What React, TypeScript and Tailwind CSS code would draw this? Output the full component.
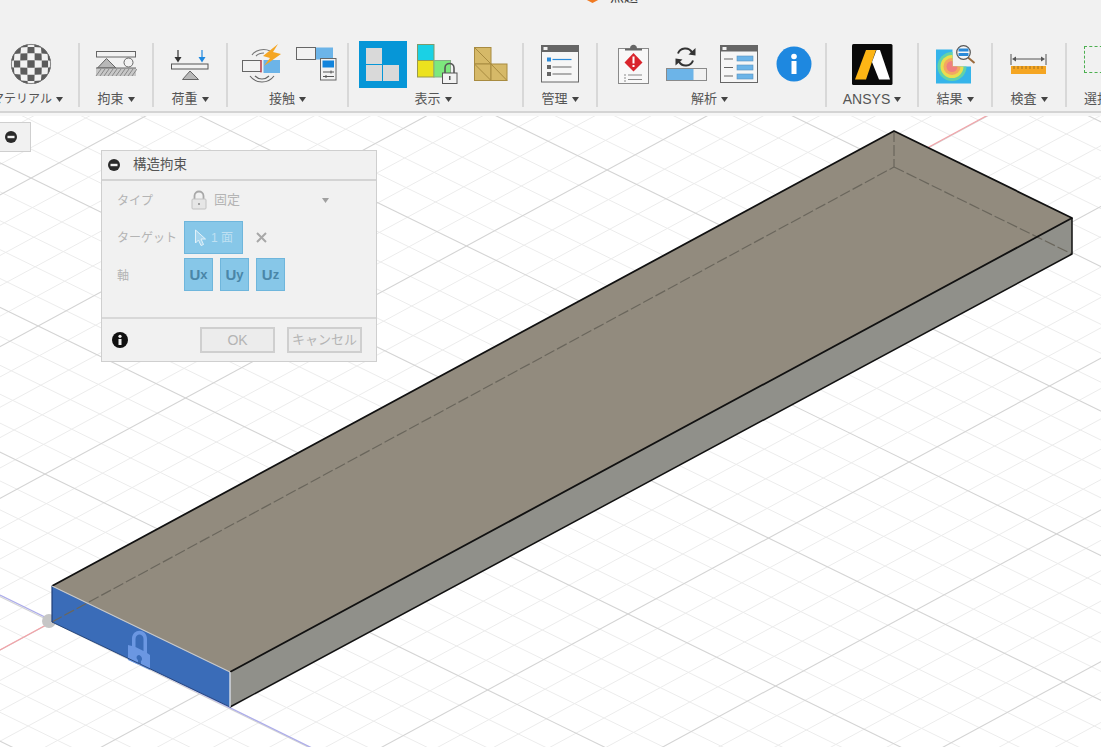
import type { ReactNode } from "react";

const jp = "font-['Liberation_Sans','Noto_Sans_CJK_JP',sans-serif]";

// grid: origin sits on the block corner, u runs along the red axis, v along the blue one
const O = { x: 52, y: 622 };
const U = { x: 140.5, y: -76 };
const V = { x: 147.5, y: 72 };

function gridLines() {
  const lines: { k: string; x1: number; y1: number; x2: number; y2: number; major: boolean }[] = [];
  for (let n = -60; n <= 60; n++) {
    const t = n / 5;
    const major = n % 5 === 0;
    const a = { x: O.x + U.x * t, y: O.y + U.y * t };
    lines.push({ k: `u${n}`, x1: a.x - V.x * 12, y1: a.y - V.y * 12, x2: a.x + V.x * 12, y2: a.y + V.y * 12, major });
    const b = { x: O.x + V.x * t, y: O.y + V.y * t };
    lines.push({ k: `v${n}`, x1: b.x - U.x * 12, y1: b.y - U.y * 12, x2: b.x + U.x * 12, y2: b.y + U.y * 12, major });
  }
  return lines;
}

function Scene() {
  const lines = gridLines();
  return (
    <svg className="absolute inset-0 h-full w-full" viewBox="0 113 1101 634">
      {lines.filter((l) => !l.major).map((l) => (
        <line key={l.k} x1={l.x1} y1={l.y1} x2={l.x2} y2={l.y2} stroke="#ececec" strokeWidth="1" />
      ))}
      {lines.filter((l) => l.major).map((l) => (
        <line key={l.k} x1={l.x1} y1={l.y1} x2={l.x2} y2={l.y2} stroke="#d4d4d4" strokeWidth="1.1" />
      ))}
      <line x1="0" y1="650" x2="988" y2="115" stroke="#f2a3a8" strokeWidth="1.3" />
      <line x1="0" y1="595" x2="312" y2="748" stroke="#adadea" strokeWidth="1.3" />
      <circle cx="49" cy="621" r="7" fill="#c6c6c6" />
      <polygon points="52,586 894,131 1072,218 230,672" fill="#928b7e" />
      <polygon points="230,672 1072,218 1072,254 230,707" fill="#90908a" />
      <polygon points="52,586 230,672 230,707 52,622" fill="#3a6cb8" />
      <g stroke="#6a665c" strokeWidth="1.2" strokeDasharray="11 3" fill="none">
        <line x1="52" y1="622" x2="894" y2="167" />
        <line x1="894" y1="167" x2="1072" y2="254" />
        <line x1="894" y1="131" x2="894" y2="167" />
      </g>
      <path fillRule="evenodd" fill="#6b97e2" d="M132 646v-7c0-11 15-11 15 0v14l3 2v15l-22-10v-15zM135.500 647l8 4v-12c0-6-8-6-8 0zM139 655c-3 0-3 4-1 5v4l3 1v-4c2-1 1-5-2-6z" />
      <g stroke="#111" strokeWidth="1.800" fill="none" strokeLinejoin="round">
        <polyline points="52,586 894,131 1072,218 230,672" />
        <polyline points="230,707 1072,254 1072,218" strokeWidth="1.500" />
      </g>
      <line x1="52" y1="622" x2="230" y2="707" stroke="#25467c" strokeWidth="1" />
      <line x1="52" y1="586" x2="52" y2="622" stroke="#1f3f78" strokeWidth="1.2" />
      <line x1="52" y1="586" x2="230" y2="672" stroke="#c8c8c8" strokeWidth="1.2" />
      <line x1="230" y1="672" x2="230" y2="707" stroke="#d8dde6" strokeWidth="1.4" />
    </svg>
  );
}

function MinusDot({ className }: { className: string }) {
  return (
    <svg className={className} viewBox="0 0 12 12">
      <circle cx="6" cy="6" r="6" fill="#2a2a2a" />
      <rect x="2.500" y="4.800" width="7" height="2.400" fill="#f1f1f1" />
    </svg>
  );
}

function CheckerBall() {
  const cells: string[] = [];
  // squares shrink a little towards the rim so it reads as a sphere
  const map = (i: number, j: number) => {
    const k = 7.4 * (1 - 0.012 * (i * i + j * j));
    return `${31 + i * k},${64 + j * k}`;
  };
  for (let i = -4; i < 4; i++) {
    for (let j = -4; j < 4; j++) {
      if ((i + j + 8) % 2 === 0) {
        cells.push([map(i + 0.5, j + 0.5), map(i + 1.5, j + 0.5), map(i + 1.5, j + 1.5), map(i + 0.5, j + 1.5)].join(" "));
      }
    }
  }
  return (
    <svg width="42" height="42" viewBox="10 43 42 42">
      <defs>
        <clipPath id="ball">
          <circle cx="31" cy="64" r="20" />
        </clipPath>
      </defs>
      <circle cx="31" cy="64" r="20" fill="#f2f2f2" />
      <g clipPath="url(#ball)">
        {cells.map((p) => (
          <polygon key={p} points={p} fill="#5c5c5c" />
        ))}
      </g>
      <circle cx="31" cy="64" r="19.600" fill="none" stroke="#666" strokeWidth="0.8" />
    </svg>
  );
}

function RestraintIcon() {
  return (
    <svg width="42" height="28" viewBox="96 50 42 28">
      <rect x="97.500" y="51.500" width="39" height="5.500" fill="#f2f2f2" stroke="#666" />
      <polygon points="107.500,58.500 98.500,68 117,68" fill="#b8b8b8" stroke="#666" />
      <circle cx="129.500" cy="62.500" r="4.500" fill="#f2f2f2" stroke="#666" />
      <rect x="97" y="68" width="40" height="8" fill="#c8c8c8" />
      <line x1="97" y1="68" x2="137" y2="68" stroke="#666" strokeWidth="1.200" />
      {[0, 1, 2, 3, 4, 5, 6, 7, 8, 9].map((i) => (
        <line key={i} x1={97 + i * 4} y1="76" x2={102 + i * 4} y2="69" stroke="#8a8a8a" strokeWidth="1" />
      ))}
    </svg>
  );
}

function LoadIcon() {
  return (
    <svg width="40" height="33" viewBox="171 47 40 33">
      <line x1="179" y1="49" x2="179" y2="58" stroke="#333" strokeWidth="1.200" />
      <polygon points="175.500,56 182.500,56 179,61.500" fill="#333" />
      <line x1="203" y1="49" x2="203" y2="58" stroke="#1e88e0" strokeWidth="1.200" />
      <polygon points="199.500,56 206.500,56 203,61.500" fill="#1e88e0" />
      <rect x="172.500" y="63" width="36.500" height="5" fill="#f2f2f2" stroke="#555" />
      <polygon points="191,70 183.500,78.500 199.500,78.500" fill="#b8b8b8" stroke="#666" />
    </svg>
  );
}

function ContactIcon() {
  return (
    <svg width="40" height="41" viewBox="241 44 40 41">
      <path d="M252 55c3-5 12-7 18-4M256 56c2-2 5-3 8-3" fill="none" stroke="#777" strokeWidth="1.100" />
      <path d="M250 76c6 8 18 8 24 0M255 76c4 4 10 4 14 0" fill="none" stroke="#666" strokeWidth="1.100" />
      <rect x="242.500" y="60.500" width="18.500" height="11" fill="#f2f2f2" stroke="#666" />
      <line x1="261" y1="60" x2="261" y2="72.500" stroke="#d0394a" strokeWidth="1.200" />
      <rect x="263.500" y="60" width="16.500" height="13" fill="#6cb4e8" />
      <polygon points="278,44 263,56 270,58 264,66 281,54 273,52" fill="#f5a623" />
    </svg>
  );
}

function ContactSetIcon() {
  return (
    <svg width="41" height="34" viewBox="296 47 41 34">
      <rect x="315" y="47.500" width="18" height="12" fill="#6cb4e8" />
      <rect x="296.500" y="47.500" width="19" height="12" fill="#f2f2f2" stroke="#666" />
      <rect x="320.500" y="58.500" width="15.500" height="21.500" fill="#f2f2f2" stroke="#666" />
      <rect x="322.500" y="60.500" width="11.500" height="7" fill="#1284dc" />
      <path d="M323 72h11M323 76.500h11" stroke="#555" strokeWidth="1" />
      <path d="M331 70.500v3M326 75v3" stroke="#555" strokeWidth="1" />
    </svg>
  );
}

function DisplayActiveIcon() {
  return (
    <svg width="48" height="47" viewBox="359 40 48 47">
      <rect x="359" y="40" width="48" height="47" fill="#0696d7" />
      <rect x="366" y="47" width="16" height="16" fill="#d9d9d9" />
      <rect x="366" y="64" width="16" height="16" fill="#d9d9d9" />
      <rect x="383" y="64" width="16" height="16" fill="#d9d9d9" />
    </svg>
  );
}

function DisplayLockIcon() {
  return (
    <svg width="41" height="41" viewBox="417 44 41 41">
      <rect x="417.500" y="44.500" width="16.500" height="16" fill="#1ad1e5" stroke="#7f9a6a" />
      <rect x="417.500" y="60.500" width="16.500" height="16.500" fill="#ece21e" stroke="#9a9a4a" />
      <rect x="434" y="60.500" width="16.500" height="16.500" fill="#7de87d" stroke="#86b086" />
      <path d="M445 73v-5c0-6 9-6 9 0v5" fill="none" stroke="#555" strokeWidth="1.600" />
      <rect x="442.500" y="73" width="14.500" height="10.500" fill="#f2f2f2" stroke="#555" />
      <rect x="449" y="76" width="1.500" height="4" fill="#555" />
    </svg>
  );
}

function DisplayTanIcon() {
  return (
    <svg width="34" height="34" viewBox="475 46.500 34 34">
      <g fill="#d6b968" stroke="#a88b40" strokeWidth="1">
        <rect x="475.500" y="47" width="16.500" height="16.500" />
        <rect x="475.500" y="63.500" width="16.500" height="16.500" />
        <rect x="492" y="63.500" width="16" height="16.500" />
      </g>
      <path d="M475.500 47l16.500 16.500M475.500 63.500l16.500 16.500M492 63.500l16 16.500" stroke="#a88b40" strokeWidth="1" />
    </svg>
  );
}

function ManageIcon() {
  return (
    <svg width="38" height="38" viewBox="542 45 38 38">
      <rect x="542.500" y="45.500" width="37" height="36.500" fill="#f6f6f6" stroke="#666" />
      <rect x="542" y="45" width="38" height="7" fill="#666" />
      <rect x="544.500" y="47" width="4" height="3" fill="#f2f2f2" />
      <rect x="548" y="57.500" width="4" height="4" fill="#2b8ad8" />
      <rect x="548" y="65" width="4" height="4" fill="#666" />
      <rect x="548" y="72" width="4" height="4" fill="#666" />
      <path d="M553.500 59.500h19" stroke="#2b8ad8" strokeWidth="1.200" />
      <path d="M553.500 67h19M553.500 74h19" stroke="#666" strokeWidth="1.200" />
    </svg>
  );
}

function ClipboardIcon() {
  return (
    <svg width="32" height="41" viewBox="617 44 32 41">
      <rect x="617.500" y="48.500" width="30" height="35" fill="#f8f8f8" stroke="#8a8a8a" />
      <path d="M624 50.500v-2h5c0-5 7-5 7 0h5v2z" fill="#666" />
      <polygon points="632.500,53 641.500,62.500 632.500,71.500 623.500,62.500" fill="#d9242c" />
      <rect x="631.500" y="56.500" width="2" height="7" fill="#fff" />
      <rect x="631.500" y="65" width="2" height="2" fill="#fff" />
      <path d="M623 75h2M623 78h2M623 81h2" stroke="#8a8a8a" />
      <path d="M627 75h14M627 79.500h14" stroke="#8a8a8a" />
    </svg>
  );
}

function SyncIcon() {
  return (
    <svg width="41" height="36" viewBox="665.500 45.500 41 36">
      <path d="M677.500 53c2-6 11-7 14-1M692.500 60c-2 6-11 7-14 1" fill="none" stroke="#333" strokeWidth="2" />
      <polygon points="695,47.500 695,55 688,54" fill="#333" />
      <polygon points="675,65 675,58 682,59" fill="#333" />
      <rect x="666" y="68" width="27" height="12" fill="#6cb4e8" />
      <rect x="666" y="68" width="40" height="12" fill="none" stroke="#8a8a8a" />
    </svg>
  );
}

function ResultListIcon() {
  return (
    <svg width="38" height="38" viewBox="720 44 38 38">
      <rect x="720.500" y="44.500" width="37" height="37" fill="#f6f6f6" stroke="#666" />
      <rect x="720" y="44" width="38" height="6.500" fill="#666" />
      <rect x="722.500" y="46" width="4" height="3" fill="#f2f2f2" />
      <path d="M724 58h9M724 66.500h9M724 75h9" stroke="#666" strokeWidth="1.200" />
      {[55, 64, 73].map((y) => (
        <rect key={y} x="737" y={y} width="16" height="5" fill="#6cb4e8" stroke="#5a92bc" strokeWidth="0.600" />
      ))}
    </svg>
  );
}

function InfoIcon() {
  return (
    <svg width="36" height="36" viewBox="0 0 36 36">
      <circle cx="18" cy="18" r="17.500" fill="#1e88e0" />
      <circle cx="18" cy="10.500" r="2.800" fill="#fff" />
      <rect x="15.500" y="15" width="5" height="13" fill="#fff" />
    </svg>
  );
}

function AnsysIcon() {
  return (
    <svg width="41" height="41" viewBox="853 43 41 41">
      <rect x="853" y="43" width="40.500" height="41" rx="1.500" fill="#0a0a0a" />
      <polygon points="867,49 877,49 867,78.500 856,78.500" fill="#fdb515" />
      <polygon points="877.500,49 881,49 891,78.500 880,78.500 873,61" fill="#fff" />
    </svg>
  );
}

function ResultPlotIcon() {
  return (
    <svg width="41" height="41" viewBox="935 44 41 41">
      <defs>
        <clipPath id="plot">
          <path d="M936 49.500h16.500v17h18.500v17h-35z" />
        </clipPath>
      </defs>
      <g clipPath="url(#plot)">
        <rect x="935" y="49" width="37" height="35" fill="#35b4ea" />
        <circle cx="952" cy="66.500" r="14.500" fill="#63d2a8" />
        <circle cx="952" cy="66.500" r="11.500" fill="#e8de50" />
        <circle cx="952" cy="66.500" r="8.500" fill="#f3a860" />
        <circle cx="952" cy="66.500" r="5.500" fill="#ef7f80" />
      </g>
      <line x1="968" y1="57.500" x2="974.500" y2="63" stroke="#9a6a3c" strokeWidth="2" />
      <circle cx="963.500" cy="52.500" r="6.800" fill="#f6f6f6" stroke="#555" strokeWidth="1.200" />
      <rect x="958.500" y="48.500" width="10" height="3" fill="#2b8ad8" />
      <rect x="958.500" y="53" width="10" height="3" fill="#2b8ad8" />
    </svg>
  );
}

function MeasureIcon() {
  return (
    <svg width="38" height="22" viewBox="1011 53 38 22">
      <path d="M1012 54v11M1047 54v11" stroke="#555" strokeWidth="1" />
      <path d="M1015 59h29" stroke="#555" strokeWidth="1" />
      <polygon points="1013,59 1017,56.500 1017,61.500" fill="#555" />
      <polygon points="1046,59 1042,56.500 1042,61.500" fill="#555" />
      <rect x="1012" y="66" width="35" height="8" fill="#f5a623" />
      <path d="M1015 66v3M1019 66v3M1023 66v3M1027 66v3M1031 66v3M1035 66v3M1039 66v3M1043 66v3" stroke="#8a6420" strokeWidth="0.800" />
    </svg>
  );
}

function Caret() {
  return (
    <svg className="ml-[4px] mt-[1px] h-[5px] w-[7px] shrink-0" viewBox="0 0 7 5">
      <polygon points="0,0 7,0 3.500,5" fill="#444" />
    </svg>
  );
}

interface GroupProps {
  label: string;
  className: string;
  iconClass?: string;
  labelClass?: string;
  children: ReactNode;
}

function ToolGroup({ label, className, iconClass = "justify-center", labelClass = "text-[13px]", children }: GroupProps) {
  return (
    <div className={`flex h-[64px] shrink-0 flex-col border-r-2 border-[#d8d8d8] ${className}`}>
      <div className={`flex h-[42px] items-center ${iconClass}`}>{children}</div>
      <div className={`mt-[6px] flex h-[16px] items-center justify-center whitespace-nowrap text-[#555] ${labelClass}`}>
        {label}
        <Caret />
      </div>
    </div>
  );
}

function Toolbar() {
  return (
    <div className="h-[113px] shrink-0 overflow-hidden border-b-2 border-[#d4d4d4] bg-[#f1f1f1]">
      <div className="h-[43px] overflow-hidden">
        <div className="-mt-[11px] ml-[585px] flex h-[14px] items-end gap-[10px]">
          <svg className="h-[14px] w-[15px]" viewBox="0 0 15 14">
            <polygon points="0,8 7.500,4 15,8 15,10 7.500,14 0,10" fill="#f07a22" />
          </svg>
          <span className="text-[14px] leading-[14px] text-[#444]">無題</span>
        </div>
      </div>
      <div className="flex">
        <ToolGroup label="マテリアル" className="-ml-[17px] w-[97px]" labelClass="pr-[6px] text-[12px]">
          <CheckerBall />
        </ToolGroup>
        <ToolGroup label="拘束" className="w-[74px]">
          <RestraintIcon />
        </ToolGroup>
        <ToolGroup label="荷重" className="w-[74px]">
          <LoadIcon />
        </ToolGroup>
        <ToolGroup label="接触" className="w-[121px]" iconClass="gap-[15px] pl-[13px]">
          <ContactIcon />
          <ContactSetIcon />
        </ToolGroup>
        <ToolGroup label="表示" className="w-[175px]" iconClass="gap-[10px] pl-[10px]" labelClass="pr-[5px] text-[13px]">
          <DisplayActiveIcon />
          <DisplayLockIcon />
          <div className="ml-[6px]">
            <DisplayTanIcon />
          </div>
        </ToolGroup>
        <ToolGroup label="管理" className="w-[74px]">
          <ManageIcon />
        </ToolGroup>
        <ToolGroup label="解析" className="w-[229px]" iconClass="pl-[20px] gap-[16px]" labelClass="pr-[4px] text-[13px]">
          <ClipboardIcon />
          <SyncIcon />
          <div className="-ml-[3px]">
            <ResultListIcon />
          </div>
          <div className="ml-[2px]">
            <InfoIcon />
          </div>
        </ToolGroup>
        <ToolGroup label="ANSYS" className="w-[92px]" labelClass="text-[14px]">
          <AnsysIcon />
        </ToolGroup>
        <ToolGroup label="結果" className="w-[74px]">
          <ResultPlotIcon />
        </ToolGroup>
        <ToolGroup label="検査" className="w-[74px]">
          <MeasureIcon />
        </ToolGroup>
        <div className="flex h-[64px] w-[60px] shrink-0 flex-col pl-[17px]">
          <div className="flex h-[42px] items-center">
            <div className="-mt-[9px] h-[27px] w-[40px] border border-dashed border-[#4caf50]" />
          </div>
          <div className="mt-[6px] flex h-[16px] items-center whitespace-nowrap text-[13px] text-[#555]">選択</div>
        </div>
      </div>
    </div>
  );
}

function AxisButton({ main, sub }: { main: string; sub: string }) {
  return (
    <div className="flex h-[33px] w-[29px] items-center justify-center border border-[#6fb6dc] bg-[#87c7e8] font-bold leading-none text-[#4a86a8]">
      <span className="text-[15px]">{main}</span>
      <span className="text-[13px]">{sub}</span>
    </div>
  );
}

function DialogPanel() {
  return (
    <div className="absolute left-[101px] top-[37px] flex h-[212px] w-[276px] flex-col border border-[#cfcfcf] bg-[#f1f1f1]">
      <div className="flex h-[30px] shrink-0 items-center border-b-2 border-[#d4d4d4] pl-[6px]">
        <MinusDot className="h-[12px] w-[12px]" />
        <span className="ml-[13px] text-[13.500px] text-[#555]">構造拘束</span>
      </div>
      <div className="flex flex-1 flex-col pl-[15px] pt-[9px] text-[12px] text-[#b4b4b4]">
        <div className="flex h-[20px] items-center">
          <span className="w-[67px] pt-[2px]">タイプ</span>
          <svg className="ml-[7px] h-[20px] w-[16px]" viewBox="0 0 16 20">
            <path d="M3.500 9V6c0-6 9-6 9 0v3" fill="none" stroke="#a8a8a8" strokeWidth="1.800" />
            <rect x="1" y="9" width="14" height="10" rx="1" fill="#e6e6e6" stroke="#c2c2c2" />
            <circle cx="8" cy="14" r="1" fill="#8a8a8a" />
          </svg>
          <span className="ml-[7px] text-[13px]">固定</span>
          <svg className="ml-[82px] h-[5px] w-[7px]" viewBox="0 0 7 5">
            <polygon points="0,0 7,0 3.500,5" fill="#a0a0a0" />
          </svg>
        </div>
        <div className="mt-[11px] flex h-[33px] items-center">
          <span className="w-[67px]">ターゲット</span>
          <div className="flex h-[33px] w-[59px] items-center border border-[#6fb6dc] bg-[#87c7e8] pl-[9px] text-[12px] text-[#bfe0f2]">
            <svg className="h-[18px] w-[13px]" viewBox="0 0 13 18">
              <path d="M1.500 1v13l3-3 2.500 5.500 2.500-1-2.500-5.500h4.500z" fill="#a6d5ee" stroke="#e2f1f9" strokeWidth="1" />
            </svg>
            <span className="ml-[4px]">1 面</span>
          </div>
          <svg className="ml-[13px] h-[11px] w-[11px]" viewBox="0 0 11 11">
            <path d="M1 1l9 9M10 1l-9 9" stroke="#a8a8a8" strokeWidth="2" />
          </svg>
        </div>
        <div className="mt-[4px] flex h-[33px] items-center">
          <span className="w-[67px] pt-[3px]">軸</span>
          <div className="flex gap-[7px]">
            <AxisButton main="U" sub="x" />
            <AxisButton main="U" sub="y" />
            <AxisButton main="U" sub="z" />
          </div>
        </div>
      </div>
      <div className="flex h-[44px] shrink-0 items-center border-t-2 border-[#d8d8d8] pl-[10px]">
        <svg className="h-[16px] w-[16px]" viewBox="0 0 16 16">
          <circle cx="8" cy="8" r="8" fill="#111" />
          <circle cx="8" cy="4.300" r="1.600" fill="#f1f1f1" />
          <rect x="6.500" y="7" width="3" height="6" fill="#f1f1f1" />
        </svg>
        <div className="ml-[72px] flex h-[26px] w-[75px] items-center justify-center border-2 border-[#cfcfcf] bg-[#ececec] text-[14px] text-[#b4b4b4]">
          OK
        </div>
        <div className="ml-[12px] flex h-[26px] w-[75px] items-center justify-center border-2 border-[#cfcfcf] bg-[#ececec] text-[13px] text-[#b4b4b4]">
          キャンセル
        </div>
      </div>
    </div>
  );
}

export default function App() {
  return (
    <div className={`flex h-[747px] w-[1101px] flex-col overflow-hidden bg-white ${jp}`}>
      <Toolbar />
      <div className="relative flex-1 overflow-hidden">
        <Scene />
        <div className="absolute inset-x-0 top-0 h-[3px] bg-[#f6f6f6]" />
        <div className="absolute left-0 top-[9px] flex h-[30px] w-[31px] items-center border border-l-0 border-[#cfcfcf] bg-[#f1f1f1] pl-[5px]">
          <MinusDot className="h-[12px] w-[12px]" />
        </div>
        <DialogPanel />
      </div>
    </div>
  );
}
